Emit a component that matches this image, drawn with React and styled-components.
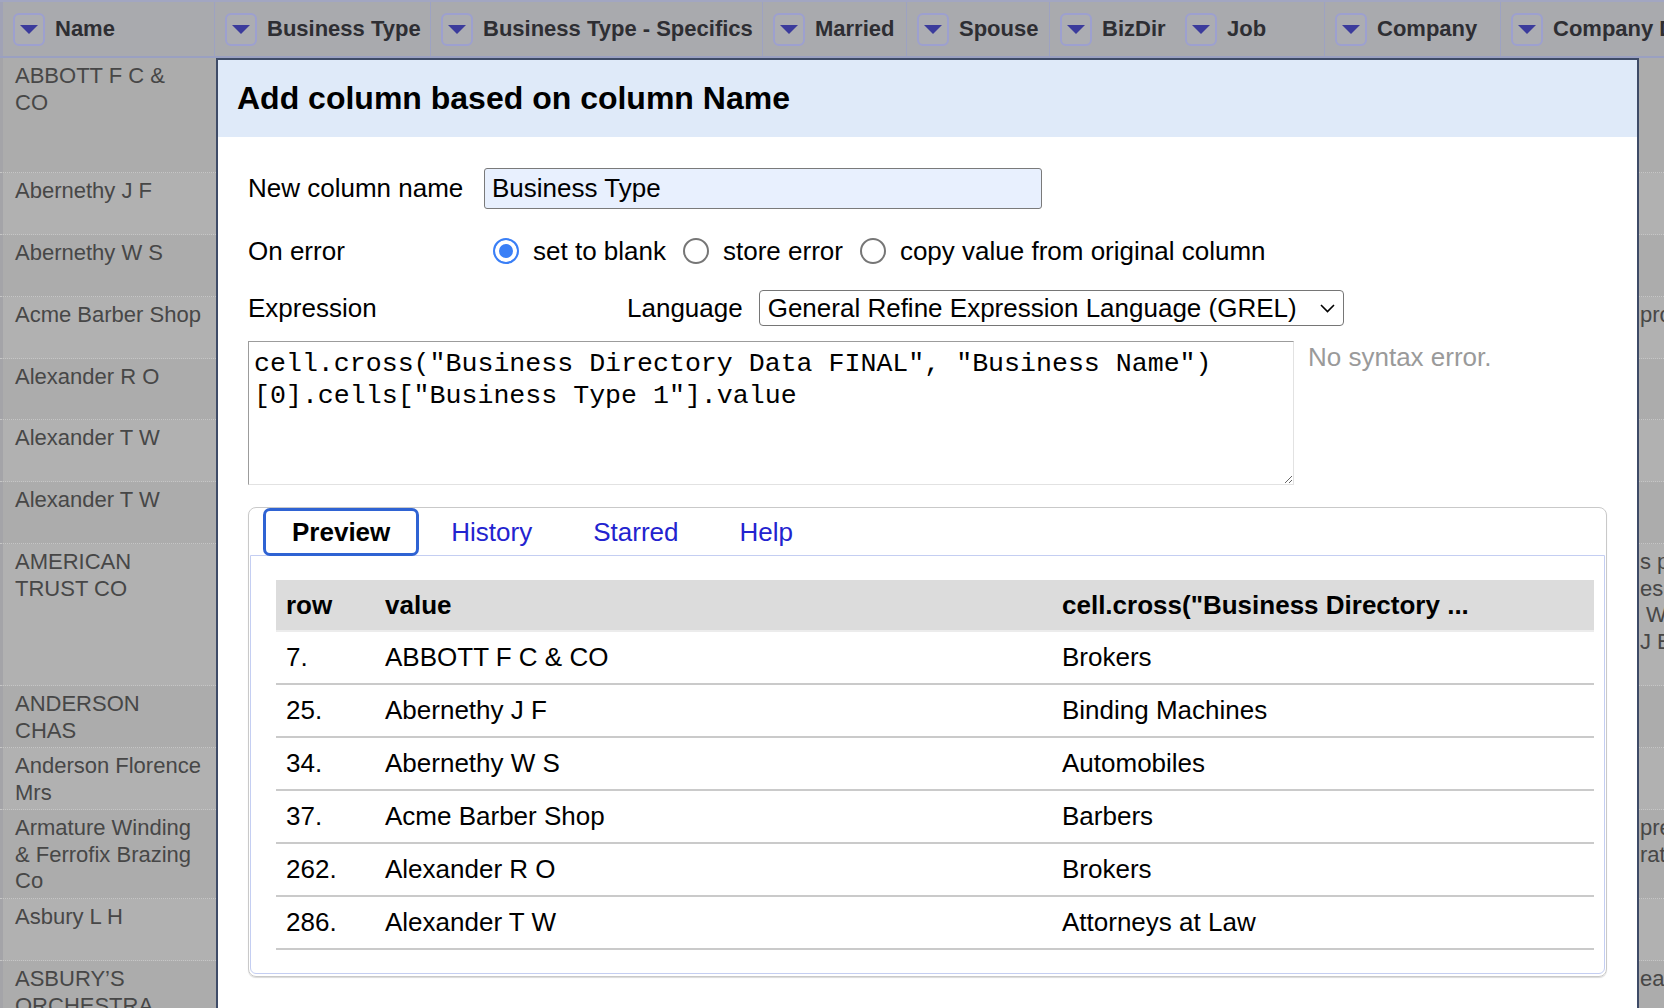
import React from 'react';
import styled, { createGlobalStyle } from 'styled-components';

const GlobalStyle = createGlobalStyle`
	html,
	body {
		margin: 0;
		padding: 0;
		overflow: hidden;
		background: #b0b0b0;
	}
	body {
		font-family: 'Liberation Sans', Arial, Helvetica, sans-serif;
	}
`;

const Page = styled.div`
	position: relative;
	width: 1664px;
	height: 1008px;
	overflow: hidden;
	background: #b0b0b0;
`;

/* ---------- grid header (behind the dialog) ---------- */

const HeaderBar = styled.div`
	display: flex;
	height: 58px;
	box-sizing: border-box;
	background: #a9aaae;
	border-top: 2px solid #a2a6c2;
	border-bottom: 2px solid #9aa0c1;
	white-space: nowrap;
	overflow: hidden;
`;

const HeaderCell = styled.div`
	display: flex;
	align-items: center;
	gap: 10px;
	box-sizing: border-box;
	flex: ${(p) => (p.$w ? `0 0 ${p.$w}px` : '1 0 auto')};
	padding-left: 10px;
	border-left: ${(p) => (p.$first ? '3px solid #a0a2b6' : 'none')};
	border-right: ${(p) => (p.$plain ? 'none' : '1px solid #9da2c2')};
	font-size: 22px;
	font-weight: 700;
	color: #2e2e33;
`;

const DropButton = styled.span`
	display: flex;
	align-items: center;
	justify-content: center;
	width: 32px;
	height: 33px;
	box-sizing: border-box;
	border: 2px solid #9da0cf;
	border-radius: 6px;
	background: #acadb2;
	flex-shrink: 0;
	&::after {
		content: '';
		width: 0;
		height: 0;
		border-left: 9px solid transparent;
		border-right: 9px solid transparent;
		border-top: 9px solid #3b3b9c;
	}
`;

/* ---------- grid rows (behind the dialog) ---------- */

const GridRow = styled.div`
	display: flex;
	height: ${(p) => p.$h}px;
	box-sizing: border-box;
	background: ${(p) => (p.$odd ? '#acacac' : '#b1b1b1')};
	border-bottom: 1px dotted #c6c6c6;
	font-size: 22px;
	line-height: 26.5px;
	color: #474747;
`;

const NameCell = styled.div`
	flex: 0 0 215px;
	box-sizing: border-box;
	padding: 5px 12px 0 12px;
	border-left: 3px solid #a4a4a8;
`;

const Filler = styled.div`
	flex: 1;
`;

const TailCell = styled.div`
	flex: 0 0 24px;
	overflow: hidden;
	white-space: pre;
	padding-top: 5px;
`;

/* ---------- dialog ---------- */

const Dialog = styled.div`
	position: absolute;
	left: 216px;
	top: 58px;
	width: 1423px;
	height: 980px;
	box-sizing: border-box;
	border: 2px solid #3e4b67;
	background: #ffffff;
	z-index: 10;
`;

const DialogTitle = styled.h1`
	margin: 0;
	height: 77px;
	display: flex;
	align-items: center;
	padding-left: 19px;
	background: #dfeaf9;
	font-size: 32px;
	font-weight: 700;
	color: #000;
`;

const DialogBody = styled.div`
	padding: 31px 30px 0 30px;
	color: #000;
	font-size: 26px;
`;

const FormRow = styled.div`
	display: flex;
	align-items: center;
	height: ${(p) => p.$h}px;
	margin-bottom: ${(p) => p.$mb || 0}px;
`;

const Label = styled.span`
	flex: 0 0 236px;
`;

const TextInput = styled.div`
	width: 558px;
	height: 41px;
	box-sizing: border-box;
	display: flex;
	align-items: center;
	padding-left: 7px;
	border: 1px solid #7a7a7a;
	border-radius: 3px;
	background: #e8f0fe;
`;

const RadioOption = styled.label`
	display: flex;
	align-items: center;
	gap: 14px;
	margin-left: ${(p) => p.$ml || 0}px;
	margin-right: 17px;
`;

const Radio = styled.span`
	width: 26px;
	height: 26px;
	box-sizing: border-box;
	border-radius: 50%;
	border: 2px solid ${(p) => (p.$checked ? '#3a7ff6' : '#767676')};
	background: ${(p) => (p.$checked ? '#3a7ff6' : '#ffffff')};
	box-shadow: ${(p) => (p.$checked ? 'inset 0 0 0 4px #ffffff' : 'none')};
`;

const LanguageLabel = styled.span`
	margin-left: 143px;
	margin-right: 16px;
`;

const SelectBox = styled.div`
	width: 585px;
	height: 36px;
	box-sizing: border-box;
	display: flex;
	align-items: center;
	padding: 0 8px 0 8px;
	border: 1px solid #767676;
	border-radius: 4px;
	& svg {
		margin-left: auto;
	}
`;

const ExpressionRow = styled.div`
	display: flex;
	align-items: flex-start;
	margin-bottom: 22px;
`;

const ExpressionArea = styled.textarea`
	width: 1046px;
	height: 144px;
	box-sizing: border-box;
	margin: 0;
	padding: 7px 5px 4px 5px;
	border: 1px solid;
	border-color: #9c9c9c #e2e2e2 #e2e2e2 #9c9c9c;
	font-family: 'Liberation Mono', 'Courier New', monospace;
	font-size: 26.6px;
	line-height: 31.5px;
	color: #000;
	resize: both;
	outline: none;
`;

const SyntaxStatus = styled.span`
	margin-left: 14px;
	padding-top: 1px;
	color: #9a9a9a;
	line-height: 30px;
`;

/* ---------- tabs ---------- */

const TabsBox = styled.div`
	width: 1359px;
	height: 470px;
	box-sizing: border-box;
	padding: 0 1px 2px 1px;
	border: 1px solid #c9c9c9;
	border-radius: 8px;
	box-shadow: 0 1px 1px rgba(0, 0, 0, 0.15);
`;

const TabBar = styled.div`
	display: flex;
	height: 48px;
	padding-left: 13px;
	margin-bottom: -1px;
	position: relative;
	z-index: 1;
`;

const Tab = styled.div`
	display: flex;
	align-items: center;
	height: 48px;
	box-sizing: border-box;
	padding: 0 26px;
	margin-right: 3px;
	border: 3px solid ${(p) => (p.$active ? '#2f63d3' : 'transparent')};
	border-radius: 7px;
	background: ${(p) => (p.$active ? '#ffffff' : 'transparent')};
	font-weight: ${(p) => (p.$active ? 700 : 400)};
	color: ${(p) => (p.$active ? '#000' : '#2323cf')};
`;

const TabPanel = styled.div`
	height: 419px;
	box-sizing: border-box;
	border: 1px solid #c4cef2;
	border-radius: 0 0 6px 6px;
	padding: 24px 0 0 25px;
`;

const PreviewTable = styled.table`
	width: 1318px;
	border-collapse: collapse;
	font-size: 26px;
	color: #000;
`;

const HeadCell = styled.th`
	width: ${(p) => (p.$w ? `${p.$w}px` : 'auto')};
	height: 51px;
	box-sizing: border-box;
	padding: 0 10px;
	background: #dcdcdc;
	border-bottom: 2px solid #ececec;
	text-align: left;
	font-weight: 700;
	white-space: nowrap;
`;

const BodyCell = styled.td`
	height: 53px;
	box-sizing: border-box;
	padding: 0 10px;
	border-bottom: 2px solid #cacaca;
	white-space: nowrap;
`;

const rows = [
	{ name: 'ABBOTT F C & CO', h: 115 },
	{ name: 'Abernethy J F', h: 62 },
	{ name: 'Abernethy W S', h: 62 },
	{ name: 'Acme Barber Shop', h: 62, tail: 'pro' },
	{ name: 'Alexander R O', h: 61 },
	{ name: 'Alexander T W', h: 62 },
	{ name: 'Alexander T W', h: 62 },
	{ name: 'AMERICAN TRUST CO', h: 142, tail: 's p\nes\n W\nJ E' },
	{ name: 'ANDERSON CHAS', h: 62 },
	{ name: 'Anderson Florence Mrs', h: 62 },
	{ name: 'Armature Winding & Ferrofix Brazing Co', h: 89, tail: 'pre\nrat' },
	{ name: 'Asbury L H', h: 62 },
	{ name: 'ASBURY’S ORCHESTRA', h: 80, tail: 'ead' },
];

const columns = [
	{ label: 'Name', w: 215, first: true },
	{ label: 'Business Type', w: 216 },
	{ label: 'Business Type - Specifics', w: 332 },
	{ label: 'Married', w: 144 },
	{ label: 'Spouse', w: 143 },
	{ label: 'BizDir', w: 125, plain: true },
	{ label: 'Job', w: 150 },
	{ label: 'Company', w: 176 },
	{ label: 'Company Directory' },
];

const preview = [
	['7.', 'ABBOTT F C & CO', 'Brokers'],
	['25.', 'Abernethy J F', 'Binding Machines'],
	['34.', 'Abernethy W S', 'Automobiles'],
	['37.', 'Acme Barber Shop', 'Barbers'],
	['262.', 'Alexander R O', 'Brokers'],
	['286.', 'Alexander T W', 'Attorneys at Law'],
];

const expression =
	'cell.cross("Business Directory Data FINAL", "Business Name")[0].cells["Business Type 1"].value';

const App = () => {
	return (
		<>
			<GlobalStyle />
			<Page>
				<HeaderBar>
					{columns.map((c) => (
						<HeaderCell key={c.label} $w={c.w} $first={c.first} $plain={c.plain}>
							<DropButton />
							{c.label}
						</HeaderCell>
					))}
				</HeaderBar>
				{rows.map((r, i) => (
					<GridRow key={i} $h={r.h} $odd={i % 2 === 0}>
						<NameCell>{r.name}</NameCell>
						<Filler />
						<TailCell>{r.tail || ''}</TailCell>
					</GridRow>
				))}

				<Dialog>
					<DialogTitle>Add column based on column Name</DialogTitle>
					<DialogBody>
						<FormRow $h={41} $mb={22}>
							<Label>New column name</Label>
							<TextInput>Business Type</TextInput>
						</FormRow>
						<FormRow $h={40} $mb={19}>
							<Label>On error</Label>
							<RadioOption $ml={9}>
								<Radio $checked />
								set to blank
							</RadioOption>
							<RadioOption>
								<Radio />
								store error
							</RadioOption>
							<RadioOption>
								<Radio />
								copy value from original column
							</RadioOption>
						</FormRow>
						<FormRow $h={36} $mb={15}>
							<Label>Expression</Label>
							<LanguageLabel>Language</LanguageLabel>
							<SelectBox>
								General Refine Expression Language (GREL)
								<svg width='15' height='9' viewBox='0 0 15 9'>
									<polyline
										points='1,1 7.5,7.5 14,1'
										fill='none'
										stroke='#000'
										strokeWidth='1.6'
									/>
								</svg>
							</SelectBox>
						</FormRow>
						<ExpressionRow>
							<ExpressionArea value={expression} readOnly spellCheck={false} />
							<SyntaxStatus>No syntax error.</SyntaxStatus>
						</ExpressionRow>

						<TabsBox>
							<TabBar>
								<Tab $active>Preview</Tab>
								<Tab>History</Tab>
								<Tab>Starred</Tab>
								<Tab>Help</Tab>
							</TabBar>
							<TabPanel>
								<PreviewTable>
									<thead>
										<tr>
											<HeadCell $w={99}>row</HeadCell>
											<HeadCell $w={677}>value</HeadCell>
											<HeadCell>cell.cross("Business Directory ...</HeadCell>
										</tr>
									</thead>
									<tbody>
										{preview.map((p) => (
											<tr key={p[0]}>
												<BodyCell>{p[0]}</BodyCell>
												<BodyCell>{p[1]}</BodyCell>
												<BodyCell>{p[2]}</BodyCell>
											</tr>
										))}
									</tbody>
								</PreviewTable>
							</TabPanel>
						</TabsBox>
					</DialogBody>
				</Dialog>
			</Page>
		</>
	);
};

export default App;
